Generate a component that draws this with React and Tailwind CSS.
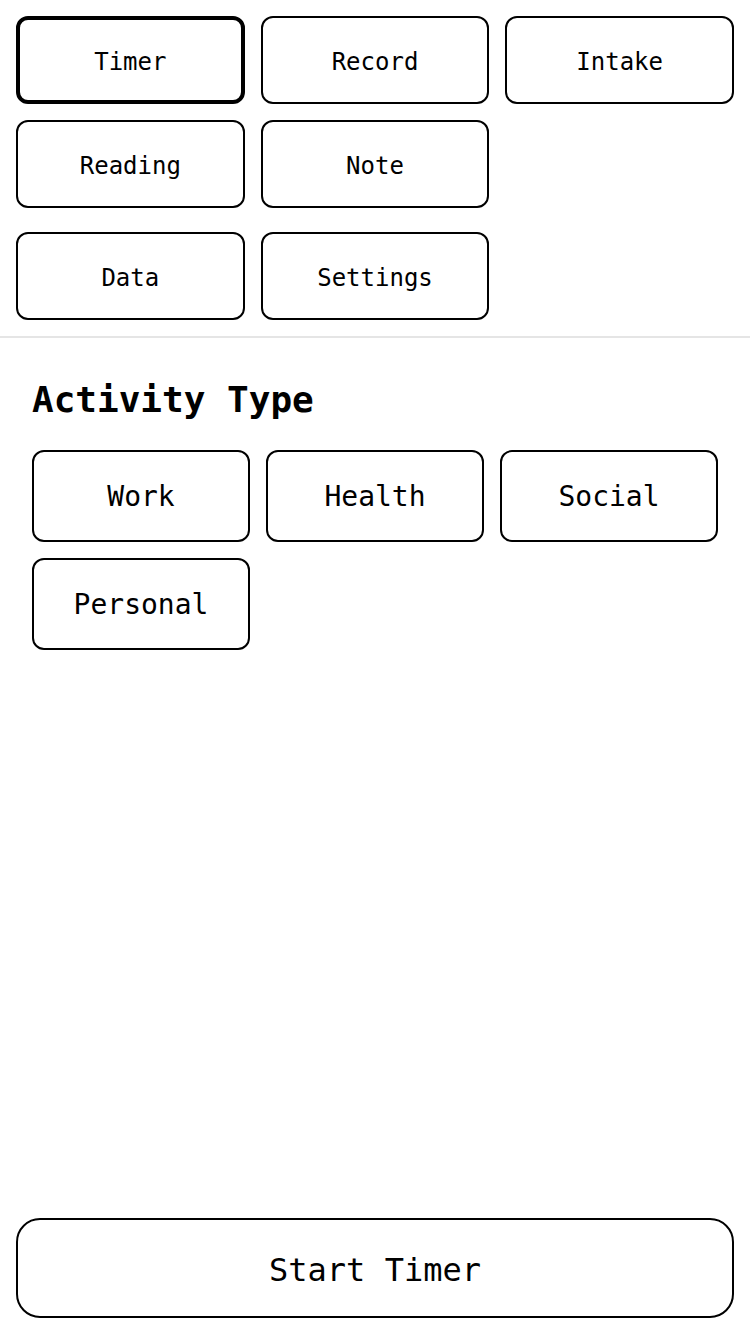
import { useState } from "react";

const navRows = [
    ["Timer", "Record", "Intake"],
    ["Reading", "Note"],
];
const navExtra = ["Data", "Settings"];
const activities = ["Work", "Health", "Social", "Personal"];

function NavButton({ label, active, onClick }) {
    return (
        <button
            onClick={onClick}
            className={`h-[88px] rounded-xl bg-white text-[24px] text-black flex items-center justify-center pt-[4px] ${
                active ? "border-4 border-black" : "border-2 border-black"
            }`}>
            {label}
        </button>
    );
}

export default function App() {
    const [tab, setTab] = useState("Timer");
    const [activity, setActivity] = useState(null);

    return (
        <div
            className="min-h-[1334px] w-[750px] bg-white text-black flex flex-col"
            style={{ fontFamily: '"DejaVu Sans Mono", "Liberation Mono", monospace' }}>

            {/* Top nav */}
            <div className="p-4">
                <div className="grid grid-cols-3 gap-4">
                    {navRows.flat().map((label) => (
                        <NavButton key={label} label={label} active={tab === label} onClick={() => setTab(label)} />
                    ))}
                </div>
                <div className="grid grid-cols-3 gap-4 mt-6">
                    {navExtra.map((label) => (
                        <NavButton key={label} label={label} active={tab === label} onClick={() => setTab(label)} />
                    ))}
                </div>
            </div>

            <div className="h-[2px] bg-[#e5e5e5]" />

            {/* Activity type */}
            <div className="px-8 pt-10">
                <h2 className="text-[36px] leading-[44px] font-bold mb-7">Activity Type</h2>
                <div className="grid grid-cols-3 gap-4">
                    {activities.map((a) => (
                        <button
                            key={a}
                            onClick={() => setActivity(a)}
                            className={`h-[92px] rounded-xl border-2 border-black text-[28px] flex items-center justify-center pt-[2px] ${
                                activity === a ? "bg-black text-white" : "bg-white text-black"
                            }`}>
                            {a}
                        </button>
                    ))}
                </div>
            </div>

            <div className="flex-1" />

            <div className="p-4">
                <button className="w-full h-[100px] rounded-3xl border-2 border-black bg-white text-[32px] text-black pt-[4px]">
                    Start Timer
                </button>
            </div>
        </div>
    );
}
